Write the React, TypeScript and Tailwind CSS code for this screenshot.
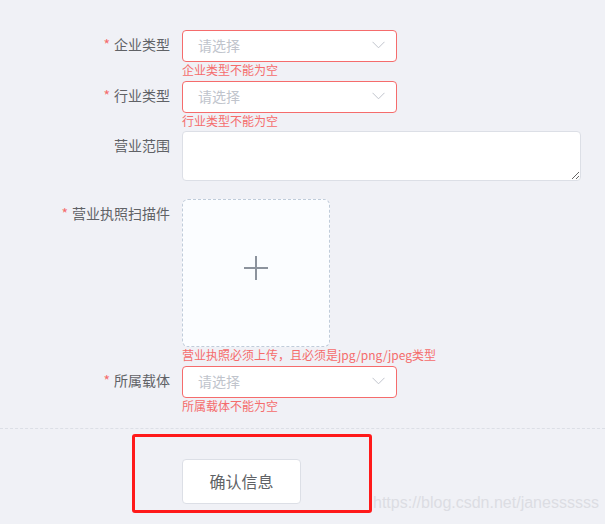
import React from "react"

const font = { fontFamily: '"Noto Sans CJK SC", "Liberation Sans", sans-serif' }

function Label({ text, required }: { text: string; required?: boolean }) {
  return (
    <div className="w-[182px] shrink-0 pr-3 text-right text-sm leading-[29px] text-[#606266]">
      {required && <span className="mr-1 text-[#f56c6c]">*</span>}
      {text}
    </div>
  )
}

function Select() {
  return (
    <div className="flex h-8 w-[215px] items-center justify-between rounded border border-[#f56c6c] bg-white pb-[2px] pl-[15px] pr-[11px]">
      <span className="text-sm text-[#c0c4cc]">请选择</span>
      <svg width="13" height="8" viewBox="0 0 13 8" fill="none">
        <polyline points="0.5,0.8 6.5,6.8 12.5,0.8" stroke="#c0c4cc" strokeWidth="1" />
      </svg>
    </div>
  )
}

function Error({ text, h }: { text: string; h: string }) {
  return <div className={`${h} pt-[2px] text-xs leading-none text-[#f56c6c]`}>{text}</div>
}

export default function App() {
  return (
    <div className="relative min-h-[524px] overflow-hidden bg-[#f0f1f6]" style={font}>
      <div className="pt-[30px]">
        <div className="flex">
          <Label text="企业类型" required />
          <div>
            <Select />
            <Error text="企业类型不能为空" h="h-[19px]" />
          </div>
        </div>
        <div className="flex">
          <Label text="行业类型" required />
          <div>
            <Select />
            <Error text="行业类型不能为空" h="h-[18px]" />
          </div>
        </div>
        <div className="mb-[18px] flex">
          <Label text="营业范围" />
          <textarea className="block h-[50px] w-[399px] rounded border border-[#dcdfe6] bg-white px-[15px] py-[5px] text-sm outline-none" />
        </div>
        <div className="flex">
          <Label text="营业执照扫描件" required />
          <div>
            <div className="flex h-[148px] w-[148px] items-center justify-center rounded-md border border-dashed border-[#c0ccda] bg-[#fbfdff]">
              <svg width="24" height="24" viewBox="0 0 24 24" className="mb-[10px]">
                <path d="M0 12h24M12 0v24" stroke="#8c939d" strokeWidth="2" />
              </svg>
            </div>
            <Error text="营业执照必须上传，且必须是jpg/png/jpeg类型" h="h-[19px]" />
          </div>
        </div>
        <div className="flex">
          <Label text="所属载体" required />
          <div>
            <Select />
            <Error text="所属载体不能为空" h="h-[30px]" />
          </div>
        </div>
      </div>

      <div className="border-t border-dashed border-[#dcdfe6]" />

      <div className="ml-[132px] mt-[5px] h-[79px] w-[240px] rounded-[3px] border-[3px] border-[#ff1a1a] pl-[47px] pt-[22px]">
        <button className="h-[45px] w-[119px] rounded border border-[#dcdfe6] bg-white pb-[2px] text-base text-[#606266]">
          确认信息
        </button>
      </div>

      <div
        className="absolute left-[373px] top-[491px] text-base text-[#dcdde3]"
        style={{ fontFamily: '"Liberation Sans", Arial, sans-serif' }}
      >
        https://blog.csdn.net/janessssss
      </div>
    </div>
  )
}
